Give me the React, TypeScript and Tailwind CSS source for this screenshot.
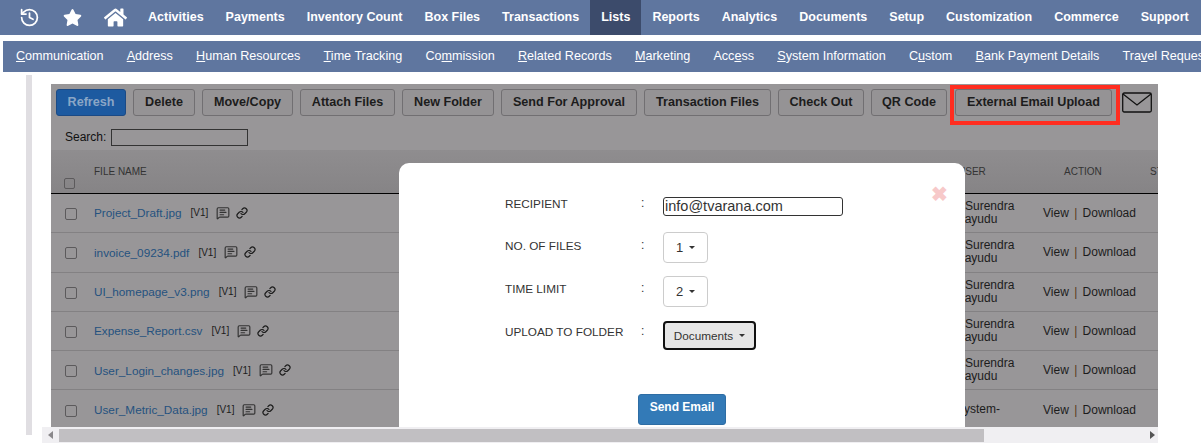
import { History, Link, MessageSquareText } from "lucide-react";
import { FaHome, FaStar } from "react-icons/fa";

const mainLinks = ["Activities", "Payments", "Inventory Count", "Box Files", "Transactions", "Lists", "Reports", "Analytics", "Documents", "Setup", "Customization", "Commerce", "Support"];

// before / underlined access key / after
const subLinks = [
  ["", "C", "ommunication"],
  ["", "A", "ddress"],
  ["", "H", "uman Resources"],
  ["", "T", "ime Tracking"],
  ["Co", "m", "mission"],
  ["", "R", "elated Records"],
  ["", "M", "arketing"],
  ["Acc", "e", "ss"],
  ["", "S", "ystem Information"],
  ["C", "u", "stom"],
  ["", "B", "ank Payment Details"],
  ["Tra", "v", "el Request"],
];

const toolbar = [
  { label: "Delete", w: "w-[62px]" },
  { label: "Move/Copy", w: "w-[91px]" },
  { label: "Attach Files", w: "w-[95px]" },
  { label: "New Folder", w: "w-[92px]" },
  { label: "Send For Approval", w: "w-[136px]" },
  { label: "Transaction Files", w: "w-[127px]" },
  { label: "Check Out", w: "w-[86px]" },
  { label: "QR Code", w: "w-[76px]" },
];

const files = [
  { name: "Project_Draft.jpg", user: ["Surendra", "Nayudu"] },
  { name: "invoice_09234.pdf", user: ["Surendra", "Nayudu"] },
  { name: "UI_homepage_v3.png", user: ["Surendra", "Nayudu"] },
  { name: "Expense_Report.csv", user: ["Surendra", "Nayudu"] },
  { name: "User_Login_changes.jpg", user: ["Surendra", "Nayudu"] },
  { name: "User_Metric_Data.jpg", user: ["System-"] },
];

function Caret() {
  return <span className="ml-[6px] inline-block border-x-[3px] border-t-[3px] border-x-transparent border-t-[#333] align-middle" />;
}

function Field({ label, pad, children }: { label: string; pad: string; children: React.ReactNode }) {
  return (
    <div className="flex items-start">
      <span className={`w-[136px] text-[11.75px] text-[#333] ${pad}`}>{label}</span>
      <span className={`w-[22px] text-xs text-[#333] ${pad}`}>:</span>
      {children}
    </div>
  );
}

export default function App() {
  return (
    <div className="h-[448px] w-[1201px] overflow-hidden bg-white font-['Liberation_Sans',Arial,sans-serif]">
      {/* Main nav */}
      <nav className="flex h-[35px] items-center bg-[#5f769f] pl-[19px] text-[12.5px] font-bold text-white">
        <History size={21} strokeWidth={2} className="mr-[23px] shrink-0" />
        <FaStar size={19} className="mr-[22px] shrink-0" />
        <FaHome size={23} className="mr-[10px] shrink-0" />
        {mainLinks.map((l) => (
          <a key={l} className={`flex h-full items-center px-[11px] whitespace-nowrap ${l === "Lists" ? "bg-[#3c4b6b]" : ""}`}>{l}</a>
        ))}
      </nav>

      {/* Sub nav */}
      <div className="mt-[6px] ml-[3px] flex h-[31px] items-center overflow-hidden bg-[#5f769f] pl-[1.4px] text-[12.6px] text-white">
        {subLinks.map(([a, k, b]) => (
          <a key={a + k + b} className="px-[11.6px] whitespace-nowrap">{a}<span className="underline">{k}</span>{b}</a>
        ))}
      </div>

      <div className="relative mt-[3px] flex h-[370px] pl-[26px]">
        <div className="h-[360px] w-[6px] bg-[#e0dee2]" />

        <div className="ml-[10px] flex w-[1116px] flex-col">
          <div className="mt-[9px] ml-[9px] flex h-[343px] w-[1107px] flex-col overflow-hidden bg-[#989698]">
            {/* Toolbar */}
            <div className="flex h-[43px] shrink-0 items-start gap-[7px] pt-[5px] pl-[5px] text-[12.6px] font-bold text-[#1c1c1c]">
              <button className="h-[27px] w-[70px] shrink-0 rounded-[3px] border border-[#1b4a85] bg-[#1d5aa0] text-[#8ba6c6]">Refresh</button>
              {toolbar.map((t) => (
                <button key={t.label} className={`h-[27px] shrink-0 rounded-[3px] border border-[#716f72] bg-[#959395] whitespace-nowrap ${t.w}`}>{t.label}</button>
              ))}
              <button className="ml-[1px] h-[27px] w-[157px] shrink-0 rounded-[3px] border border-[#716f72] bg-[#959395] whitespace-nowrap">External Email Upload</button>
              <svg width="30" height="21" viewBox="0 0 30 21" className="mt-[3px] ml-[3px] shrink-0" fill="none" stroke="#111" strokeWidth="1.3">
                <rect x="0.7" y="1" width="28.6" height="19" rx="1.5" />
                <path d="M1 2 L15 13 L29 2" />
              </svg>
            </div>

            <div className="flex h-[20px] shrink-0 items-center pl-[14px] text-xs text-[#111]">
              Search:
              <span className="ml-[5px] h-[17px] w-[137px] border border-[#333]" />
            </div>

            {/* Table */}
            <div className="mt-[3px] grid h-[44px] shrink-0 grid-cols-[43px_862px_87px_107px_8px] border-b border-black bg-gradient-to-b from-[#8f8d8f] to-[#868486] text-[10px] text-[#333]">
              <div className="flex items-end pb-[4px] pl-[13px]"><span className="h-[11px] w-[11px] rounded-[2px] border border-[#5c5a5c]" /></div>
              <div className="pt-[14px]">FILE NAME</div>
              <div className="pt-[14px] pl-[2px]">USER</div>
              <div className="pt-[14px] pl-[21px]">ACTION</div>
              <div className="overflow-hidden pt-[14px]">STATUS</div>
            </div>

            {files.map((f) => (
              <div key={f.name} className="grid h-[39.3px] shrink-0 grid-cols-[43px_862px_87px_107px_8px] items-center border-b border-[#838183] text-xs">
                <div className="pl-[14px]"><span className="mt-[2px] block h-[12px] w-[12px] rounded-[2px] border border-[#5c5a5c]" /></div>
                <div className="flex items-center text-[11.75px] text-[#25527f]">
                  {f.name}
                  <span className="ml-[9px] text-[10px] text-[#1c1c1c]">[V1]</span>
                  <MessageSquareText size={14} className="ml-[8px] text-[#333]" />
                  <Link size={12} strokeWidth={2.4} className="ml-[6px] text-[#1c1c1c]" />
                </div>
                <div className="leading-[13px] text-[#1c1c1c]">
                  {f.user.map((u, i) => <div key={u} className={i === 0 && f.user.length > 1 ? "pl-[9px]" : ""}>{u}</div>)}
                </div>
                <div className="whitespace-nowrap text-[#1c1c1c]">View <span className="mx-[2px] text-[#5a3a1c]">|</span> Download</div>
              </div>
            ))}
          </div>
        </div>

        {/* Red annotation frame */}
        <div className="absolute top-[10px] left-[950px] h-[40px] w-[170px] border-[4px] border-[#ff2d20]" />

        {/* Modal */}
        <div className="absolute top-[88px] left-[399px] h-[264px] w-[566px] overflow-hidden rounded-t-[10px] bg-white pt-[34px] pl-[106px]">
          <span className="absolute top-[21px] left-[532px] text-[20px] leading-[20px] font-bold text-[#f7c9c9]">✖</span>
          <div className="flex flex-col">
            <Field label="RECIPIENT" pad="-mt-[2px]">
              <span className="flex h-[19px] w-[180px] items-center rounded-[3px] border border-[#333] pl-[1px] text-[14.5px] text-[#333]">info@tvarana.com</span>
            </Field>
            <div className="mt-[16px]">
              <Field label="NO. OF FILES" pad="pt-[5px]">
                <span className="flex h-[31px] w-[45px] items-center justify-center rounded-[4px] border border-[#ccc] text-[13px] text-[#333]">1<Caret /></span>
              </Field>
            </div>
            <div className="mt-[13px]">
              <Field label="TIME LIMIT" pad="pt-[4px]">
                <span className="flex h-[31px] w-[45px] items-center justify-center rounded-[4px] border border-[#ccc] text-[13px] text-[#333]">2<Caret /></span>
              </Field>
            </div>
            <div className="mt-[14px]">
              <Field label="UPLOAD TO FOLDER" pad="pt-[2px]">
                <span className="flex h-[29px] w-[93px] items-center justify-center rounded-[4px] border-2 border-[#111] bg-[#e6e6e6] text-[11.75px] text-[#333]">Documents<Caret /></span>
              </Field>
            </div>
          </div>
          <button className="absolute top-[231px] left-[239px] h-[31px] w-[88px] rounded-[3px] border border-[#2e6da4] bg-[#337ab7] pb-[5px] text-xs font-bold text-white">Send Email</button>
        </div>

        {/* Horizontal scrollbar */}
        <div className="absolute top-[352px] left-[42px] flex h-[16px] w-[1116px] items-center bg-[#f0eff2]">
          <span className="ml-[6px] border-y-[4px] border-r-[5px] border-y-transparent border-r-[#8a888b]" />
          <span className="ml-[6px] h-[13px] w-[925px] bg-[#c1bfc2]" />
          <span className="mr-[3px] ml-auto border-y-[4px] border-l-[5px] border-y-transparent border-l-[#555]" />
        </div>
      </div>
    </div>
  );
}
